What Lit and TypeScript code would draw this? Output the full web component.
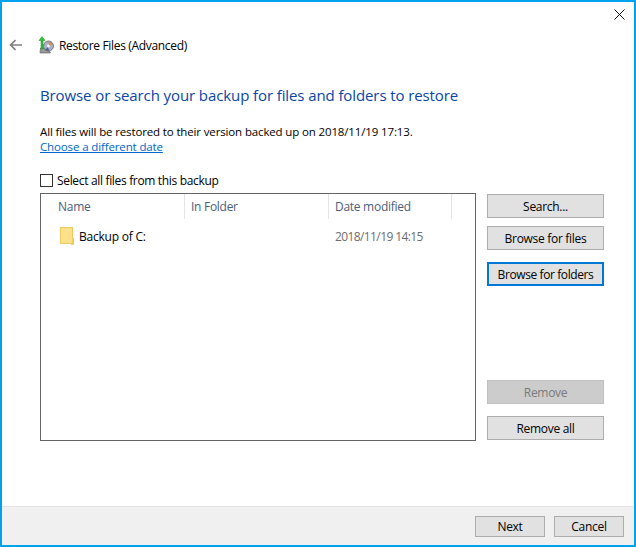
import { LitElement, html, css } from "lit";
import { customElement } from "lit/decorators.js";

@customElement("app-root")
export class AppRoot extends LitElement {
  static styles = css`
    :host {
      display: block;
      width: 636px;
      height: 547px;
      font-family: "Open Sans", "Noto Sans", sans-serif;
      font-size: 12px;
      color: #000;
    }
    * { box-sizing: border-box; }
    .window {
      width: 636px;
      height: 547px;
      border: 2px solid #00a2ed;
      background: #fff;
      display: flex;
      flex-direction: column;
    }
    .close-row { height: 26px; display: flex; justify-content: flex-end; padding: 7px 9px 0 0; }
    .close { width: 11px; height: 11px; display: block; }
    .title-row { height: 34px; display: flex; align-items: center; padding: 0 0 0 7px; }
    .back { width: 14px; height: 12px; margin-right: 15px; display: block; }
    .app-icon { width: 16px; height: 18px; margin-right: 5px; display: block; }
    .title { letter-spacing: -0.33px; }
    .body { flex: 1; padding: 0 0 0 38px; display: flex; flex-direction: column; min-height: 0; }
    h1 {
      margin: 23px 0 0;
      font-size: 15px;
      font-weight: 400;
      color: #0a46a8;
      line-height: 20px;
      letter-spacing: -0.1px;
    }
    .info { margin-top: 19px; line-height: 15px; font-size: 11.5px; letter-spacing: -0.14px; }
    .link { display: block; color: #0066cc; text-decoration: underline; font-size: 11.5px; letter-spacing: -0.13px; line-height: 15px; }
    .check-row { display: flex; align-items: center; margin-top: 19px; height: 15px; letter-spacing: -0.33px; }
    .box { width: 13px; height: 13px; border: 1px solid #333; margin-right: 4px; background: #fff; }
    .main { display: flex; margin-top: 5px; }
    .list {
      width: 436px;
      height: 248px;
      border: 1px solid #646464;
      background: #fff;
    }
    .head { display: flex; height: 25px; }
    .col { height: 25px; border-right: 1px solid #e5e5e5; color: #4c607a; padding: 5px 0 0 6px; line-height: 15px; letter-spacing: -0.28px; }
    .c1 { width: 144px; padding-left: 17px; }
    .c2 { width: 144px; }
    .c3 { width: 123px; }
    .row { display: flex; align-items: center; height: 18px; margin-top: 8px; padding-left: 19px; }
    .folder { width: 14px; height: 18px; display: block; margin-right: 5px; }
    .name { width: 256px; letter-spacing: -0.22px; }
    .date { color: #6d6d6d; letter-spacing: -0.6px; }
    .side { margin-left: 11px; margin-top: 1px; display: flex; flex-direction: column; }
    .btn {
      width: 117px;
      height: 24px;
      background: #e1e1e1;
      border: 1px solid #adadad;
      display: flex;
      align-items: center;
      justify-content: center;
      letter-spacing: -0.3px;
      line-height: 15px;
      padding: 0;
    }
    .mt8 { margin-top: 8px; }
    .mt12 { margin-top: 12px; }
    .mt94 { margin-top: 94px; }
    .focus { border: 2px solid #0078d7; letter-spacing: -0.4px; }
    .disabled { background: #cccccc; color: #7a7a7a; border-color: #bfbfbf; }
    .footer {
      height: 39px;
      background: #f0f0f0;
      border-top: 1px solid #e3e3e3;
      display: flex;
      justify-content: flex-end;
      padding: 9px 10px 0 0;
      gap: 9px;
    }
    .fbtn { width: 70px; height: 21px; }
  `;

  render() {
    return html`
      <div class="window">
        <div class="close-row">
          <svg class="close" viewBox="0 0 11 11"><path d="M.5.5l10 10M10.5.5l-10 10" stroke="#111" fill="none"/></svg>
        </div>
        <div class="title-row">
          <svg class="back" viewBox="0 0 14 12"><path d="M13 6H2M6.5 1.2L1.6 6l4.9 4.8" stroke="#808080" stroke-width="1.7" fill="none"/></svg>
          <svg class="app-icon" viewBox="0 0 16 18">
            <path d="M2.5 12h7l3 5H2z" fill="#9a9a9a" stroke="#555" stroke-width=".6"/>
            <circle cx="10.5" cy="10" r="5" fill="#aab0c8" stroke="#555" stroke-width=".7"/>
            <circle cx="10.5" cy="10" r="1.4" fill="#fff"/>
            <path d="M10.5 5.5a4.5 4.5 0 0 1 4 3l-3.4 1z" fill="#d8895a"/>
            <path d="M7 14l3-3 1 4z" fill="#4a5f90"/>
            <path d="M3 13V4.5H1L4 .5l3 4H5V13z" fill="#2fc33a" stroke="#1a8a22" stroke-width=".5"/>
          </svg>
          <span class="title">Restore Files (Advanced)</span>
        </div>
        <div class="body">
          <h1>Browse or search your backup for files and folders to restore</h1>
          <div class="info">All files will be restored to their version backed up on 2018/11/19 17:13.</div>
          <a class="link">Choose a different date</a>
          <div class="check-row"><span class="box"></span>Select all files from this backup</div>
          <div class="main">
            <div class="list">
              <div class="head">
                <div class="col c1">Name</div>
                <div class="col c2">In Folder</div>
                <div class="col c3">Date modified</div>
              </div>
              <div class="row">
                <svg class="folder" viewBox="0 0 14 18">
                  <rect x=".5" y=".5" width="12" height="16" fill="#ffe08a" stroke="#eecb60"/>
                  <path d="M13.5 11v6.5H11" fill="none" stroke="#eecb60"/>
                </svg>
                <span class="name">Backup of C:</span>
                <span class="date">2018/11/19 14:15</span>
              </div>
            </div>
            <div class="side">
              <div class="btn">Search...</div>
              <div class="btn mt8">Browse for files</div>
              <div class="btn mt12 focus">Browse for folders</div>
              <div class="btn mt94 disabled">Remove</div>
              <div class="btn mt12">Remove all</div>
            </div>
          </div>
        </div>
        <div class="footer">
          <div class="btn fbtn">Next</div>
          <div class="btn fbtn">Cancel</div>
        </div>
      </div>
    `;
  }
}
